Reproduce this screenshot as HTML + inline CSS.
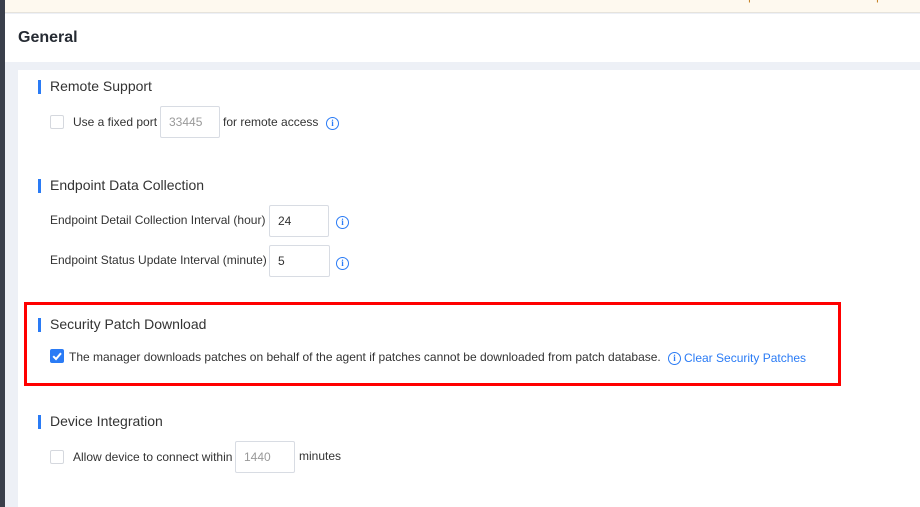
<!DOCTYPE html>
<html><head><meta charset="utf-8"><style>
*{box-sizing:border-box;margin:0;padding:0}
body{width:920px;height:507px;overflow:hidden;background:#edf0f6;font-family:"Liberation Sans",sans-serif;color:#333;position:relative}
.a{position:absolute;white-space:nowrap}
.t{font-size:12px;color:#333}
.h{font-size:14px;color:#333}
.bar{position:absolute;width:3px;height:14px;background:#2a7bf5}
.cb{position:absolute;width:14px;height:14px;border:1px solid #d5d8de;border-radius:2px;background:#fff}
.in{position:absolute;border:1px solid #d8dce3;border-radius:2px;background:#fff;font-size:12px;padding-left:8px}
.ic{position:absolute;width:13px;height:13px;border:1.3px solid #2a7bf5;border-radius:50%;color:#2a7bf5;font-size:9px;font-weight:bold;text-align:center;line-height:10px;font-family:"Liberation Serif",serif}
</style></head><body>
<div class="a" style="left:0;top:0;width:5px;height:507px;background:#3a3f4b"></div>
<div class="a" style="left:5px;top:0;width:915px;height:13px;background:#fef9ef;border-bottom:1px solid #e6e3dc"></div>
<div class="a" style="left:592px;top:-11px;font-size:12px;color:#c7862a">Please rename the default super admin account to impr</div>
<div class="a" style="left:5px;top:14px;width:915px;height:48px;background:#fff"></div>
<div class="a" style="left:18px;top:29px;font-size:16px;font-weight:bold;color:#262b33">General</div>
<div class="a" style="left:18px;top:70px;width:902px;height:437px;background:#fff"></div>

<div class="bar" style="left:38px;top:80px"></div>
<div class="a h" style="left:50px;top:78px">Remote Support</div>
<div class="cb" style="left:50px;top:115px"></div>
<div class="a t" style="left:73px;top:115px">Use a fixed port</div>
<div class="in" style="left:160px;top:106px;width:60px;height:32px;line-height:30px;color:#999">33445</div>
<div class="a t" style="left:223px;top:115px">for remote access</div>
<div class="ic" style="left:326px;top:117px">i</div>

<div class="bar" style="left:38px;top:179px"></div>
<div class="a h" style="left:50px;top:177px">Endpoint Data Collection</div>
<div class="a t" style="left:50px;top:213px">Endpoint Detail Collection Interval (hour)</div>
<div class="in" style="left:269px;top:205px;width:60px;height:32px;line-height:30px">24</div>
<div class="ic" style="left:336px;top:216px">i</div>
<div class="a t" style="left:50px;top:253px">Endpoint Status Update Interval (minute)</div>
<div class="in" style="left:269px;top:245px;width:61px;height:32px;line-height:30px">5</div>
<div class="ic" style="left:336px;top:257px">i</div>

<div class="a" style="left:24px;top:302px;width:817px;height:84px;border:3px solid #f00"></div>
<div class="bar" style="left:38px;top:318px"></div>
<div class="a h" style="left:50px;top:316px">Security Patch Download</div>
<div class="a" style="left:50px;top:349px;width:14px;height:14px;background:#2a7bf5;border-radius:2px">
<svg width="14" height="14" viewBox="0 0 14 14"><path d="M3.2 7.2 L6 10 L11 4.2" stroke="#fff" stroke-width="2" fill="none"/></svg></div>
<div class="a t" style="left:69px;top:350px">The manager downloads patches on behalf of the agent if patches cannot be downloaded from patch database.</div>
<div class="ic" style="left:668px;top:352px">i</div>
<div class="a" style="left:684px;top:351px;font-size:12px;color:#2a7bf5">Clear Security Patches</div>

<div class="bar" style="left:38px;top:415px"></div>
<div class="a h" style="left:50px;top:413px">Device Integration</div>
<div class="cb" style="left:50px;top:450px"></div>
<div class="a t" style="left:73px;top:450px">Allow device to connect within</div>
<div class="in" style="left:235px;top:441px;width:60px;height:32px;line-height:30px;color:#999">1440</div>
<div class="a t" style="left:299px;top:449px">minutes</div>
</body></html>
